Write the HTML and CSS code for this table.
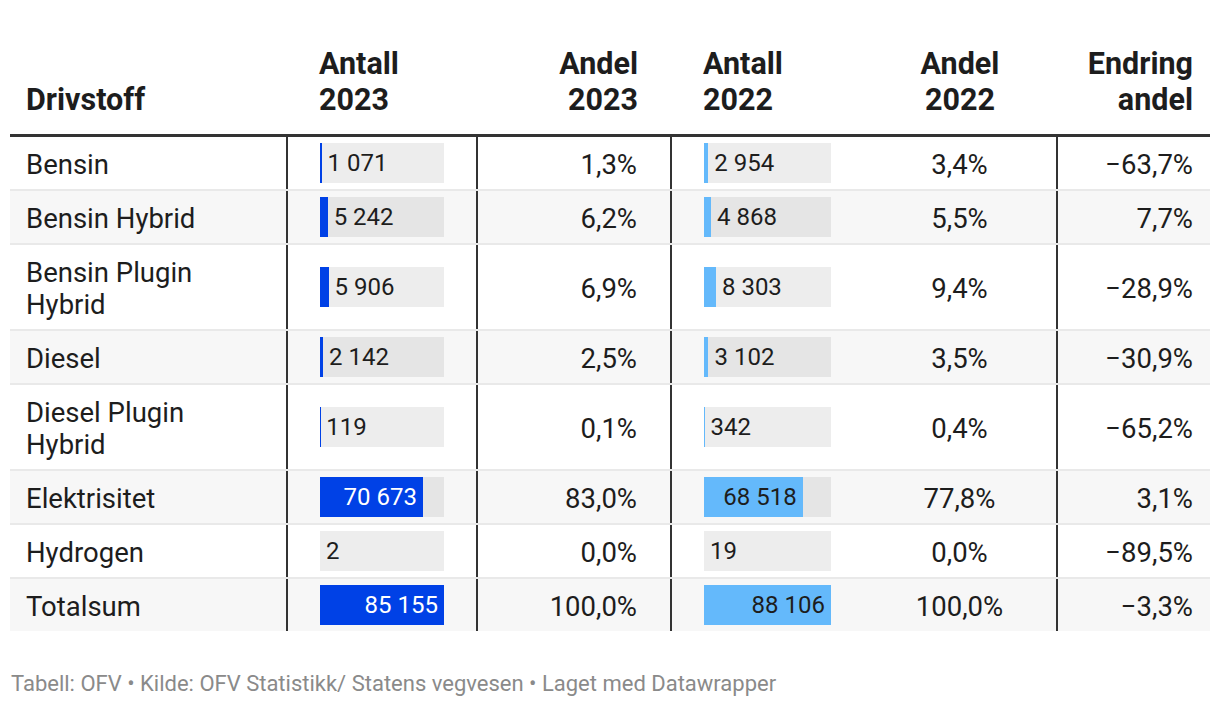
FILE: index.html
```html
<!DOCTYPE html>
<html lang="no">
<head>
<meta charset="utf-8">
<title>Drivstoff</title>
<link rel="stylesheet" href="styles.css">
</head>
<body>
<div class="wrap">
  <table class="tbl">
    <colgroup>
      <col class="w1"><col class="w2"><col class="w3"><col class="w4"><col class="w5"><col class="w6">
    </colgroup>
    <thead>
      <tr>
        <th class="c1">Drivstoff</th>
        <th class="c2">Antall<br>2023</th>
        <th class="c3">Andel<br>2023</th>
        <th class="c4">Antall<br>2022</th>
        <th class="c5">Andel<br>2022</th>
        <th class="c6">Endring<br>andel</th>
      </tr>
    </thead>
    <tbody>
      <tr>
        <td class="c1">Bensin</td>
        <td class="c2"><div class="track"><div class="fill dark" style="width:1.258%"></div><span class="lbl out">1 071</span></div></td>
        <td class="c3">1,3%</td>
        <td class="c4"><div class="track"><div class="fill light" style="width:3.353%"></div><span class="lbl out">2 954</span></div></td>
        <td class="c5">3,4%</td>
        <td class="c6">−63,7%</td>
      </tr>
      <tr>
        <td class="c1">Bensin Hybrid</td>
        <td class="c2"><div class="track"><div class="fill dark" style="width:6.156%"></div><span class="lbl out">5 242</span></div></td>
        <td class="c3">6,2%</td>
        <td class="c4"><div class="track"><div class="fill light" style="width:5.525%"></div><span class="lbl out">4 868</span></div></td>
        <td class="c5">5,5%</td>
        <td class="c6">7,7%</td>
      </tr>
      <tr>
        <td class="c1">Bensin Plugin<br>Hybrid</td>
        <td class="c2"><div class="track"><div class="fill dark" style="width:6.936%"></div><span class="lbl out">5 906</span></div></td>
        <td class="c3">6,9%</td>
        <td class="c4"><div class="track"><div class="fill light" style="width:9.424%"></div><span class="lbl out">8 303</span></div></td>
        <td class="c5">9,4%</td>
        <td class="c6">−28,9%</td>
      </tr>
      <tr>
        <td class="c1">Diesel</td>
        <td class="c2"><div class="track"><div class="fill dark" style="width:2.515%"></div><span class="lbl out">2 142</span></div></td>
        <td class="c3">2,5%</td>
        <td class="c4"><div class="track"><div class="fill light" style="width:3.521%"></div><span class="lbl out">3 102</span></div></td>
        <td class="c5">3,5%</td>
        <td class="c6">−30,9%</td>
      </tr>
      <tr>
        <td class="c1">Diesel Plugin<br>Hybrid</td>
        <td class="c2"><div class="track"><div class="fill dark" style="width:0.14%"></div><span class="lbl out">119</span></div></td>
        <td class="c3">0,1%</td>
        <td class="c4"><div class="track"><div class="fill light" style="width:0.388%"></div><span class="lbl out">342</span></div></td>
        <td class="c5">0,4%</td>
        <td class="c6">−65,2%</td>
      </tr>
      <tr>
        <td class="c1">Elektrisitet</td>
        <td class="c2"><div class="track"><div class="fill dark" style="width:82.99%"><span class="lbl in">70 673</span></div></div></td>
        <td class="c3">83,0%</td>
        <td class="c4"><div class="track"><div class="fill light" style="width:77.77%"><span class="lbl in">68 518</span></div></div></td>
        <td class="c5">77,8%</td>
        <td class="c6">3,1%</td>
      </tr>
      <tr>
        <td class="c1">Hydrogen</td>
        <td class="c2"><div class="track"><div class="fill dark" style="width:0%"></div><span class="lbl out">2</span></div></td>
        <td class="c3">0,0%</td>
        <td class="c4"><div class="track"><div class="fill light" style="width:0%"></div><span class="lbl out">19</span></div></td>
        <td class="c5">0,0%</td>
        <td class="c6">−89,5%</td>
      </tr>
      <tr>
        <td class="c1">Totalsum</td>
        <td class="c2"><div class="track"><div class="fill dark" style="width:100%"><span class="lbl in">85 155</span></div></div></td>
        <td class="c3">100,0%</td>
        <td class="c4"><div class="track"><div class="fill light" style="width:100%"><span class="lbl in">88 106</span></div></div></td>
        <td class="c5">100,0%</td>
        <td class="c6">−3,3%</td>
      </tr>
    </tbody>
  </table>
  <div class="foot">Tabell: OFV • Kilde: OFV Statistikk/ Statens vegvesen • Laget med Datawrapper</div>
</div>
</body>
</html>
```

FILE: styles.css
```css
html, body {
  margin: 0;
  padding: 0;
  background: #ffffff;
}
body {
  font-family: Roboto, "Liberation Sans", sans-serif;
  color: #1d1d1d;
}
.wrap {
  padding: 46px 10px 0 10px;
}
.tbl {
  width: 1200px;
  border-collapse: collapse;
  table-layout: fixed;
}
.w1 { width: 277px; }
.w2 { width: 190px; }
.w3 { width: 194px; }
.w4 { width: 192px; }
.w5 { width: 194px; }
.w6 { width: 153px; }

.tbl th {
  font-weight: 700;
  font-size: 30.5px;
  line-height: 36px;
  vertical-align: bottom;
  padding: 0 0 16px 0;
  border-bottom: 3px solid #333333;
  color: #1d1d1d;
}
.tbl td {
  font-size: 27.5px;
  line-height: 32px;
  vertical-align: middle;
  padding: 12px 0 8px 0;
  border-bottom: 2px solid #e9e9e9;
}
.tbl tbody tr:nth-child(even) td {
  background: #f7f7f7;
}
.tbl tbody tr:last-child td {
  border-bottom: none;
}
.tbl .c1 { text-align: left; padding-left: 16px; }
.tbl .c2 { text-align: left; padding-left: 32px; padding-right: 32px; }
.tbl .c3 { text-align: right; padding-right: 33px; }
.tbl .c4 { text-align: left; padding-left: 32px; padding-right: 32px; }
.tbl .c5 { text-align: center; }
.tbl .c6 { text-align: right; padding-right: 17px; }

.tbl td.c2 { border-left: 2px solid #333333; border-right: 2px solid #333333; padding-top: 0; padding-bottom: 0; }
.tbl td.c3 { border-right: 2px solid #333333; }
.tbl td.c4 { padding-top: 0; padding-bottom: 0; }
.tbl td.c5 { border-right: 2px solid #333333; }

.track {
  display: flex;
  align-items: center;
  height: 40px;
  background: rgba(0, 0, 0, 0.07);
}
.fill {
  height: 100%;
  display: flex;
  align-items: center;
  justify-content: flex-end;
  flex-shrink: 0;
}
.fill.dark { background: #0041e6; color: #ffffff; }
.fill.light { background: #64b9fb; color: #1d1d1d; }
.lbl {
  font-size: 24px;
  line-height: 28px;
  white-space: nowrap;
}
.lbl.out { padding-left: 6px; color: #1d1d1d; }
.lbl.in { padding-right: 6px; }

.foot {
  margin-top: 40px;
  padding-left: 1px;
  font-size: 22px;
  line-height: 26px;
  color: #8a8a8a;
}
```
